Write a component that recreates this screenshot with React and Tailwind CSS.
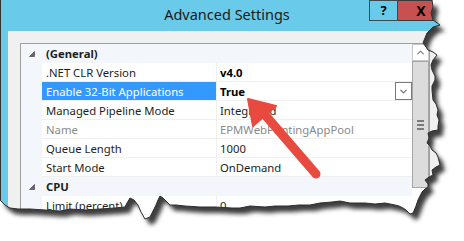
import { ChevronDown, ChevronUp } from "lucide-react";

const torn =
  "432,0 433,7 431,13 433,20 440,25 433,27 430,30 427,33 425,38 423,43 426,47 428,50 433,52 437,55 433,60 431,65 432,70 435,76 435,80 432,86 432,90 433,100 436,104 438,110 437,115 439,120 438,126 438,130 432,131 428,133 429,138 427,143 430,146 432,150 436,153 438,157 440,165 436,167 432,170 433,175 429,177 425,180 428,184 428,187 425,189 422,192 420,196 418,200 416,206 413,213 410,214 406,210 403,208 399,206 395,205 390,204 385,203 375,204 365,203 350,203 340,201 332,202 320,203 310,205 299,205 288,206 275,206 265,207 250,206 240,208 232,208 215,207 200,207 185,206 176,205 170,205 166,201 163,198 160,196 158,200 156,205 153,211 150,217 145,219 141,212 138,205 134,200 130,198 127,203 125,207 115,208 100,209 85,210 70,209 60,211 45,210 30,209 18,209 10,208 5,205 2,202 0,200";

const outside = "M0 0H464V241H0Z M0 0 L" + torn.split(" ").join(" L") + " Z";

const rows = [
  { type: "cat", label: "(General)" },
  { label: ".NET CLR Version", value: "v4.0", bold: true },
  { label: "Enable 32-Bit Applications", value: "True", bold: true, selected: true },
  { label: "Managed Pipeline Mode", value: "Integrated" },
  { label: "Name", value: "EPMWebPrintingAppPool", dim: true },
  { label: "Queue Length", value: "1000" },
  { label: "Start Mode", value: "OnDemand" },
  { type: "cat", label: "CPU" },
  { label: "Limit (percent)", value: "0" },
];

function Expander() {
  return (
    <svg width="6" height="6" viewBox="0 0 6 6">
      <polygon points="5.5,0.5 5.5,5.5 0.5,5.5" fill="#6a6a6a" stroke="#555" strokeWidth="0.8" />
    </svg>
  );
}

function Row({ row }) {
  if (row.type === "cat") {
    return (
      <div className="flex h-[19px] bg-[#F3F6FB]">
        <div className="w-[21px] flex items-center justify-center pl-[1px] pt-[1px]">
          <Expander />
        </div>
        <div className="pl-[4px] pt-[1px] flex items-center font-bold text-[#1e1e1e]">{row.label}</div>
      </div>
    );
  }
  return (
    <div className="flex h-[19px]">
      <div className="w-[21px] bg-[#F3F6FB]" />
      <div
        className={`w-[175px] pl-[4px] pt-[1px] flex items-center border-b border-r border-[#F0F0F0] ${
          row.selected ? "bg-[#3399FF] text-white" : row.dim ? "bg-white text-[#8a8a8a]" : "bg-white text-[#1e1e1e]"
        }`}
      >
        {row.label}
      </div>
      <div
        className={`flex-1 pl-[3px] flex items-center bg-white border-b border-[#F0F0F0] ${
          row.bold ? "font-bold text-black" : row.dim ? "text-[#8a8a8a]" : "text-[#1e1e1e]"
        }`}
      >
        <span className="pt-[1px]">{row.value}</span>
        {row.selected && (
          <div className="ml-auto w-[17px] h-[18px] border border-[#7a7a7a] bg-white flex items-center justify-center">
            <ChevronDown size={11} strokeWidth={2.5} className="text-[#6d6d6d]" />
          </div>
        )}
      </div>
    </div>
  );
}

export default function App() {
  return (
    <div className="relative w-[464px] h-[241px] overflow-hidden bg-white font-['Noto_Sans',sans-serif]">
      <div className="w-[452px] h-[232px] flex flex-col bg-[#69CBE9] border-l border-[#333]">
        <div className="relative h-[31px] flex items-center justify-center">
          <span className="text-[14.5px] text-[#1a1a1a] pl-[1px] pb-[1px]">Advanced Settings</span>
          <div className="absolute top-0 left-[368px] flex">
            <div className="w-[29px] h-[21px] border border-[#3a4a52] flex items-center justify-center font-bold text-[13px] text-black">
              ?
            </div>
            <div className="w-[46px] h-[21px] bg-[#C75050] border-y border-[#3a3a3a] flex items-center justify-center font-bold text-[14px] text-black">
              X
            </div>
          </div>
        </div>
        <div className="flex-1 ml-[7px] bg-[#F0F0F0] pt-[12px] pl-[12px]">
          <div className="w-[410px] h-[180px] border border-[#A0A0A0] flex text-[11.3px] leading-none">
            <div className="flex-1 flex flex-col bg-white">
              {rows.map((r, i) => (
                <Row key={i} row={r} />
              ))}
            </div>
            <div className="w-[17px] flex flex-col bg-white">
              <div className="h-[17px] border border-[#C8C8C8] bg-white flex items-center justify-center">
                <ChevronUp size={11} strokeWidth={2.5} className="text-[#7a7a7a]" />
              </div>
              <div className="h-[127px] bg-[#DCDCDC] border border-[#A6A6A6] flex flex-col items-center justify-center gap-[2px]">
                <div className="w-[7px] h-[2px] bg-[#7b7b7b]" />
                <div className="w-[7px] h-[2px] bg-[#7b7b7b]" />
                <div className="w-[7px] h-[2px] bg-[#7b7b7b]" />
              </div>
            </div>
          </div>
        </div>
      </div>

      <svg className="absolute inset-0 pointer-events-none" width="464" height="241" viewBox="0 0 464 241">
        <line x1="266" y1="116" x2="316" y2="174" stroke="#E84A3F" strokeWidth="9" strokeLinecap="round" />
        <polygon points="248,99 253,126 276,106" fill="#E84A3F" stroke="#E84A3F" strokeWidth="2" strokeLinejoin="round" />
      </svg>

      <svg className="absolute inset-0 pointer-events-none" width="464" height="241" viewBox="0 0 464 241">
        <defs>
          <clipPath id="out">
            <path d={outside} clipRule="evenodd" />
          </clipPath>
          <filter id="blur" x="-10%" y="-10%" width="130%" height="130%">
            <feGaussianBlur stdDeviation="1.9" />
          </filter>
        </defs>
        <path d={outside} fill="#ffffff" fillRule="evenodd" />
        <g clipPath="url(#out)">
          <polygon points={"0,0 " + torn} fill="#3e3e3e" transform="translate(5,6)" filter="url(#blur)" />
        </g>
        <polyline points={torn} fill="none" stroke="#2f2f2f" strokeWidth="1" />
      </svg>
    </div>
  );
}
